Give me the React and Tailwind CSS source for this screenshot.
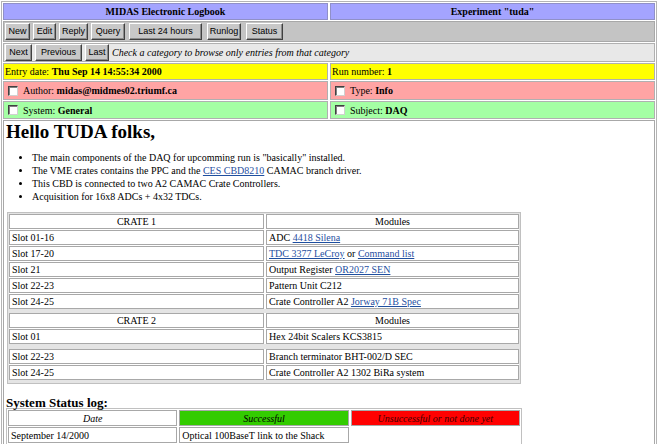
import React from "react";

const sans = "font-['Liberation_Sans',Arial,sans-serif]";
const link = "text-[#1f4f9f] underline";

function Btn({ w, children }) {
  return (
    <span
      className={`${w} h-[17px] shrink-0 flex items-center justify-center bg-[#c8c8c8] border border-t-white border-l-white border-r-[#404040] border-b-[#404040] shadow-[inset_-1px_-1px_0_#8c8c8c] text-[9px] leading-none text-black ${sans}`}
    >
      {children}
    </span>
  );
}

function Check() {
  return (
    <span className="w-[10px] h-[10px] shrink-0 bg-white border border-t-[#404040] border-l-[#404040] border-r-[#d0d0d0] border-b-[#d0d0d0] shadow-[inset_1px_1px_0_#808080]" />
  );
}

function Cell({ className = "", children }) {
  return (
    <div className={`border border-[#a8a8a8] px-[2px] h-[15px] flex items-center whitespace-nowrap overflow-hidden ${className}`}>
      <span>{children}</span>
    </div>
  );
}

const crate1 = [
  ["Slot 01-16", <>ADC <a className={link}>4418 Silena</a></>],
  ["Slot 17-20", <><a className={link}>TDC 3377 LeCroy</a> or <a className={link}>Command list</a></>],
  ["Slot 21", <>Output Register <a className={link}>OR2027 SEN</a></>],
  ["Slot 22-23", "Pattern Unit C212"],
  ["Slot 24-25", <>Crate Controller A2 <a className={link}>Jorway 71B Spec</a></>],
];

export default function App() {
  return (
    <div className="w-[658px] h-[444px] overflow-hidden bg-white p-[1px] font-['Liberation_Serif','Times_New_Roman',serif] text-[10px] text-black">
      <div className="h-[460px] border border-[#b4b4b4] p-[1px] flex flex-col gap-[1px]">
        {/* title */}
        <div className="grid grid-cols-2 gap-[2px] h-[17px]">
          <div className="border border-[#9090c8] bg-[#a4a4ff] flex items-center justify-center font-bold">
            MIDAS Electronic Logbook
          </div>
          <div className="border border-[#9090c8] bg-[#a4a4ff] flex items-center justify-center font-bold">
            Experiment "tuda"
          </div>
        </div>

        {/* command buttons */}
        <div className="h-[21px] border border-[#a8a8a8] bg-[#c4c4c4] flex items-center pl-[1px]">
          <Btn w="w-[25px]">New</Btn>
          <span className="w-[3px]" />
          <Btn w="w-[23px]">Edit</Btn>
          <span className="w-[3px]" />
          <Btn w="w-[29px]">Reply</Btn>
          <span className="w-[3px]" />
          <Btn w="w-[34px]">Query</Btn>
          <span className="w-[4px]" />
          <Btn w="w-[73px]">Last 24 hours</Btn>
          <span className="w-[5px]" />
          <Btn w="w-[34px]">Runlog</Btn>
          <span className="w-[5px]" />
          <Btn w="w-[37px]">Status</Btn>
        </div>

        {/* navigation */}
        <div className="h-[19px] border border-[#b0b0b0] bg-[#e8e8e8] flex items-center pl-[1px]">
          <Btn w="w-[27px]">Next</Btn>
          <span className="w-[3px]" />
          <Btn w="w-[47px]">Previous</Btn>
          <span className="w-[3px]" />
          <Btn w="w-[24px]">Last</Btn>
          <span className="ml-[3px] italic whitespace-nowrap">
            Check a category to browse only entries from that category
          </span>
        </div>

        {/* entry date */}
        <div className="grid grid-cols-2 gap-[2px] h-[17px]">
          <div className="border border-[#b0b0b0] bg-[#ffff00] flex items-center pl-[1px]">
            Entry date:&nbsp;<b>Thu Sep 14 14:55:34 2000</b>
          </div>
          <div className="border border-[#b0b0b0] bg-[#ffff00] flex items-center pl-[1px]">
            Run number:&nbsp;<b>1</b>
          </div>
        </div>

        {/* author / type */}
        <div className="grid grid-cols-2 gap-[2px] h-[19px]">
          <div className="border border-[#b0b0b0] bg-[#ffa4a4] flex items-center pl-[4px] gap-[5px]">
            <Check />
            <span>
              Author:&nbsp;<b>midas@midmes02.triumf.ca</b>
            </span>
          </div>
          <div className="border border-[#b0b0b0] bg-[#ffa4a4] flex items-center pl-[4px] gap-[5px]">
            <Check />
            <span>
              Type:&nbsp;<b>Info</b>
            </span>
          </div>
        </div>

        {/* system / subject */}
        <div className="grid grid-cols-2 gap-[2px] h-[18px]">
          <div className="border border-[#b0b0b0] bg-[#a4ffa4] flex items-center pl-[4px] gap-[5px]">
            <Check />
            <span>
              System:&nbsp;<b>General</b>
            </span>
          </div>
          <div className="border border-[#b0b0b0] bg-[#a4ffa4] flex items-center pl-[4px] gap-[5px]">
            <Check />
            <span>
              Subject:&nbsp;<b>DAQ</b>
            </span>
          </div>
        </div>

        {/* body */}
        <div className="flex-1 border border-[#a8a8a8] bg-white pl-[2px] pr-[2px]">
          <h1 className="text-[19px] leading-[22px] font-bold">Hello TUDA folks,</h1>
          <ul className="list-disc pl-[26px] mt-[8px] leading-[13px]">
            <li>The main components of the DAQ for upcomming run is "basically" installed.</li>
            <li>
              The VME crates contains the PPC and the <a className={link}>CES CBD8210</a> CAMAC branch driver.
            </li>
            <li>This CBD is connected to two A2 CAMAC Crate Controllers.</li>
            <li>Acquisition for 16x8 ADCs + 4x32 TDCs.</li>
          </ul>

          {/* crate table */}
          <div className="mt-[9px] ml-[1px] w-[514px] border border-[#c0c0c0] bg-[#e4e4e4] p-[1px] pb-[3px] flex flex-col">
            <div className="grid grid-cols-[255px_1fr] gap-x-[2px] gap-y-[1px] bg-white">
              <Cell className="justify-center">CRATE 1</Cell>
              <Cell className="justify-center">Modules</Cell>
              {crate1.map(([a, b]) => (
                <React.Fragment key={a}>
                  <Cell>{a}</Cell>
                  <Cell>{b}</Cell>
                </React.Fragment>
              ))}
            </div>
            <div className="mt-[4px] grid grid-cols-[255px_1fr] gap-x-[2px] gap-y-[1px] bg-white">
              <Cell className="justify-center">CRATE 2</Cell>
              <Cell className="justify-center">Modules</Cell>
              <Cell>Slot 01</Cell>
              <Cell>Hex 24bit Scalers KCS3815</Cell>
            </div>
            <div className="mt-[5px] grid grid-cols-[255px_1fr] gap-x-[2px] gap-y-[1px] bg-white">
              <Cell>Slot 22-23</Cell>
              <Cell>Branch terminator BHT-002/D SEC</Cell>
              <Cell>Slot 24-25</Cell>
              <Cell>Crate Controller A2 1302 BiRa system</Cell>
            </div>
          </div>

          <h3 className="mt-[13px] mb-[-1px] text-[13px] leading-[12px] font-bold">System Status log:</h3>
          <div className="w-[516px] border border-[#c0c0c0] p-[1px] grid grid-cols-3 gap-x-[2px] gap-y-[1px]">
            <div className="h-[16px] border border-[#a8a8a8] bg-white flex items-center justify-center italic">Date</div>
            <div className="h-[16px] border border-[#a8a8a8] bg-[#33cc00] flex items-center justify-center italic">Successful</div>
            <div className="h-[16px] border border-[#a8a8a8] bg-[#ff0000] flex items-center justify-center italic text-[#400000]">
              Unsuccessful or not done yet
            </div>
            <Cell className="h-[16px]">September 14/2000</Cell>
            <Cell className="h-[16px]">Optical 100BaseT link to the Shack</Cell>
            <div />
          </div>
        </div>
      </div>
    </div>
  );
}
